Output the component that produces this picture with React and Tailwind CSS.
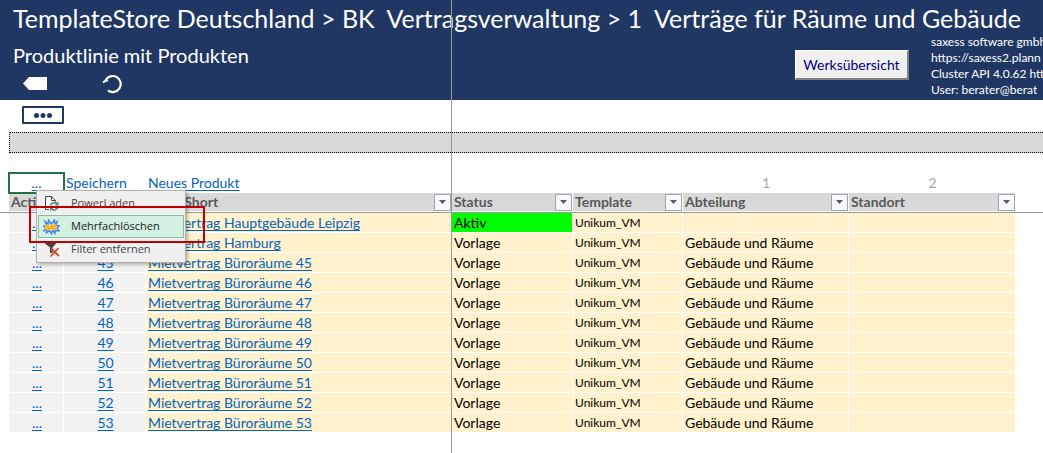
const products = [
  { id: 43, name: "Mietvertrag Hauptgebäude Leipzig", status: "Aktiv", department: "" },
  { id: 44, name: "Mietvertrag Hamburg", status: "Vorlage", department: "Gebäude und Räume" },
  ...[45, 46, 47, 48, 49, 50, 51, 52, 53].map((id) => ({
    id,
    name: `Mietvertrag Büroräume ${id}`,
    status: "Vorlage",
    department: "Gebäude und Räume",
  })),
];

const link = "text-[#0563c1] underline decoration-1 underline-offset-2 [text-decoration-skip-ink:none]";
const cell = "h-5 p-0 pl-0.5 border-b border-r border-white whitespace-nowrap overflow-hidden";

function FilterButton({ label }) {
  return (
    <button
      type="button"
      aria-label={label}
      className="flex h-[17px] w-[17px] shrink-0 items-center justify-center border border-[#a0a4ac] bg-[#f8f9fc]"
    >
      <svg width="7" height="4" viewBox="0 0 7 4" fill="#555b66">
        <path d="M0 0h7L3.5 4z" />
      </svg>
    </button>
  );
}

function HeaderCell({ children, filter }) {
  return (
    <th scope="col" className="h-5 border-b-2 border-r border-white bg-[#d9d9d9] p-0 pl-0.5 text-left font-bold text-[#595959]">
      <div className="flex h-[18px] items-center justify-between">
        <span className="whitespace-nowrap">{children}</span>
        {filter && <FilterButton label={`Filter ${children}`} />}
      </div>
    </th>
  );
}

function ReloadFileIcon() {
  return (
    <svg width="17" height="17" viewBox="0 0 17 17" fill="none">
      <path d="M6 14.500H2.500V1.500H8.500L12.500 5.500V6.500" fill="#fff" stroke="#444" />
      <path d="M8.500 1.500V5.500H12.500" stroke="#444" />
      <path d="M7.500 10.500a4 4 0 0 1 7-1.500M15 11.500a4 4 0 0 1-7 2" stroke="#5a8f78" strokeWidth="1.800" />
      <path d="M15.500 6.500v4h-4zM7 16v-4h4z" fill="#5a8f78" />
    </svg>
  );
}

function BurstIcon() {
  return (
    <svg width="17" height="16" viewBox="0 0 17 16" fill="none">
      <path
        d="M2 2.500L5 5L5.500 1L8 5L11.500 1V5L14 2.500L13.500 6L16.500 7L14 8.500L16 12L12 11.500V14.500L9.500 11.500L8.500 15L6.500 11.500L3.500 14L4 11L0.500 12L3 9L0.500 7L3.500 6.500z"
        fill="#bfe4f2"
        stroke="#3f82e8"
        strokeWidth="1.300"
      />
      <path d="M2 5.500h3l1 1 3-1 2 .5 2.500-2v6.500L11 11H5l-3-.5z" fill="#ffc928" />
      <path d="M3.500 7h2M4.500 9.500h2M8 7.500h2M9.500 9.500h2M12 7h1.500" stroke="#e5701d" strokeWidth="1.200" />
    </svg>
  );
}

function ClearFilterIcon() {
  return (
    <svg width="17" height="17" viewBox="0 0 17 17" fill="none">
      <path d="M2 1h11v1.500L9.500 6.500V12H7V6.500L2 2.500z" fill="#444" />
      <path d="M8 7.500l8 7.500M15.500 7l-8 8.500" stroke="#d24726" strokeWidth="1.800" />
    </svg>
  );
}

function MenuItem({ icon, children, active }) {
  return (
    <button
      type="button"
      role="menuitem"
      className={`flex h-[23px] w-full items-center gap-[11px] border pl-1 text-left ${
        active ? "border-[#86bfa0] bg-[#d3f0e0] text-[#222]" : "border-transparent text-[#444]"
      }`}
    >
      <span className="w-[17px] shrink-0">{icon}</span>
      <span>{children}</span>
    </button>
  );
}

export default function App() {
  return (
    <div className="relative min-h-screen overflow-hidden bg-white font-['Lato','Liberation_Sans',sans-serif] text-[14px] text-black">
      <header className="h-[100px] overflow-hidden bg-[#203764] pl-[13px] text-white">
        <h1 className="h-9 whitespace-pre text-[25px] leading-9">
          {"TemplateStore Deutschland > BK  Vertragsverwaltung > 1  Verträge für Räume und Gebäude"}
        </h1>
        <div className="grid grid-cols-[782px_114px_1fr]">
          <div>
            <h2 className="h-[38px] text-[20px] leading-[38px]">Produktlinie mit Produkten</h2>
            <div className="flex items-center gap-[54px] pl-[9px]">
              <button type="button" aria-label="Zurück">
                <svg width="26" height="14" viewBox="0 0 26 14" fill="#fff">
                  <path d="M1 6.500L7 0H25V13H7z" />
                </svg>
              </button>
              <button type="button" aria-label="Aktualisieren">
                <svg width="20" height="20" viewBox="0 0 20 20" fill="none" stroke="#fff">
                  <path d="M3.500 6.500A8 8 0 1 1 6 16.500" strokeWidth="2.200" />
                  <path d="M1 8.500L4.500 6L5.500 7.500" strokeWidth="2" />
                </svg>
              </button>
            </div>
          </div>
          <button
            type="button"
            className="mt-3.5 h-[30px] border border-b-2 border-r-2 border-white border-b-[#808080] border-r-[#808080] bg-[#f0f0f0] text-[14px] text-[#000080]"
          >
            Werksübersicht
          </button>
          <div className="-mt-0.5 overflow-hidden whitespace-nowrap pl-[22px] text-[12px] leading-4">
            <div>saxess software gmbh</div>
            <div>https://saxess2.plann</div>
            <div>Cluster API 4.0.62 htt</div>
            <div>User: berater@berat</div>
          </div>
        </div>
      </header>

      <div className="flex h-8 items-start pl-[22px] pt-1.5">
        <button
          type="button"
          aria-label="Weitere Aktionen"
          className="flex h-[18px] w-[42px] items-center justify-center rounded-[1px] border-2 border-[#203764]"
        >
          <svg width="18" height="6" viewBox="0 0 18 6" fill="#203764">
            <circle cx="2.500" cy="3.500" r="2.500" />
            <circle cx="9" cy="3.500" r="2.500" />
            <circle cx="15.500" cy="3.500" r="2.500" />
          </svg>
        </button>
      </div>
      <div className="ml-[9px] h-[21px] border border-r-0 border-dotted border-black bg-[#d9d9d9]" />

      <main className="relative ml-[9px] mt-5">
        <table className="w-[1007px] table-fixed border-separate border-spacing-0 leading-4">
          <colgroup>
            <col className="w-[55px]" />
            <col className="w-[82px]" />
            <col className="w-[306px]" />
            <col className="w-[121px]" />
            <col className="w-[110px]" />
            <col className="w-[166px]" />
            <col className="w-[167px]" />
          </colgroup>
          <thead>
            <tr>
              <td className="h-5 p-0 text-center outline-2 -outline-offset-1 outline-[#217346]">
                <a href="#menu" className={link}>...</a>
              </td>
              <td className="p-0 pl-0.5"><a href="#save" className={link}>Speichern</a></td>
              <td className="p-0 pl-0.5"><a href="#new" className={link}>Neues Produkt</a></td>
              <td />
              <td />
              <td className="p-0 text-center text-[#a6a6a6]">1</td>
              <td className="p-0 text-center text-[#a6a6a6]">2</td>
            </tr>
            <tr>
              <HeaderCell>Action</HeaderCell>
              <HeaderCell>ID</HeaderCell>
              <HeaderCell filter>Prod. Short</HeaderCell>
              <HeaderCell filter>Status</HeaderCell>
              <HeaderCell filter>Template</HeaderCell>
              <HeaderCell filter>Abteilung</HeaderCell>
              <HeaderCell filter>Standort</HeaderCell>
            </tr>
          </thead>
          <tbody>
            {products.map((p) => (
              <tr key={p.id}>
                <td className={`${cell} bg-[#f2f2f2] text-center`}><a href="#actions" className={link}>...</a></td>
                <td className={`${cell} bg-[#f2f2f2] text-center`}><a href="#product" className={link}>{p.id}</a></td>
                <td className={`${cell} bg-[#fff2cc]`}><a href="#product" className={link}>{p.name}</a></td>
                <td className={`${cell} ${p.status === "Aktiv" ? "bg-[#00ff00]" : "bg-[#fff2cc]"}`}>{p.status}</td>
                <td className={`${cell} bg-[#fff2cc] text-[12px]`}>Unikum_VM</td>
                <td className={`${cell} bg-[#fff2cc]`}>{p.department}</td>
                <td className={`${cell} bg-[#fff2cc]`} />
              </tr>
            ))}
          </tbody>
        </table>

        <div className="absolute -left-[9px] right-0 top-[39px] h-px bg-[#999]" />

        <div
          role="menu"
          className="absolute left-[27px] top-[17px] w-[150px] border border-[#b0b0b0] bg-[#f0f0f0] p-px font-['Open_Sans','Noto_Sans',sans-serif] text-[11px] shadow-[2px_2px_3px_rgba(0,0,0,0.25)]"
        >
          <MenuItem icon={<ReloadFileIcon />}>PowerLaden</MenuItem>
          <MenuItem icon={<BurstIcon />} active>Mehrfachlöschen</MenuItem>
          <MenuItem icon={<ClearFilterIcon />}>Filter entfernen</MenuItem>
        </div>
        <div className="pointer-events-none absolute left-5 top-[33px] h-[37px] w-[176px] border-2 border-[#c00000]" />
      </main>

      <div className="pointer-events-none absolute inset-y-0 left-[451px] w-px bg-[#999]" />
    </div>
  );
}
